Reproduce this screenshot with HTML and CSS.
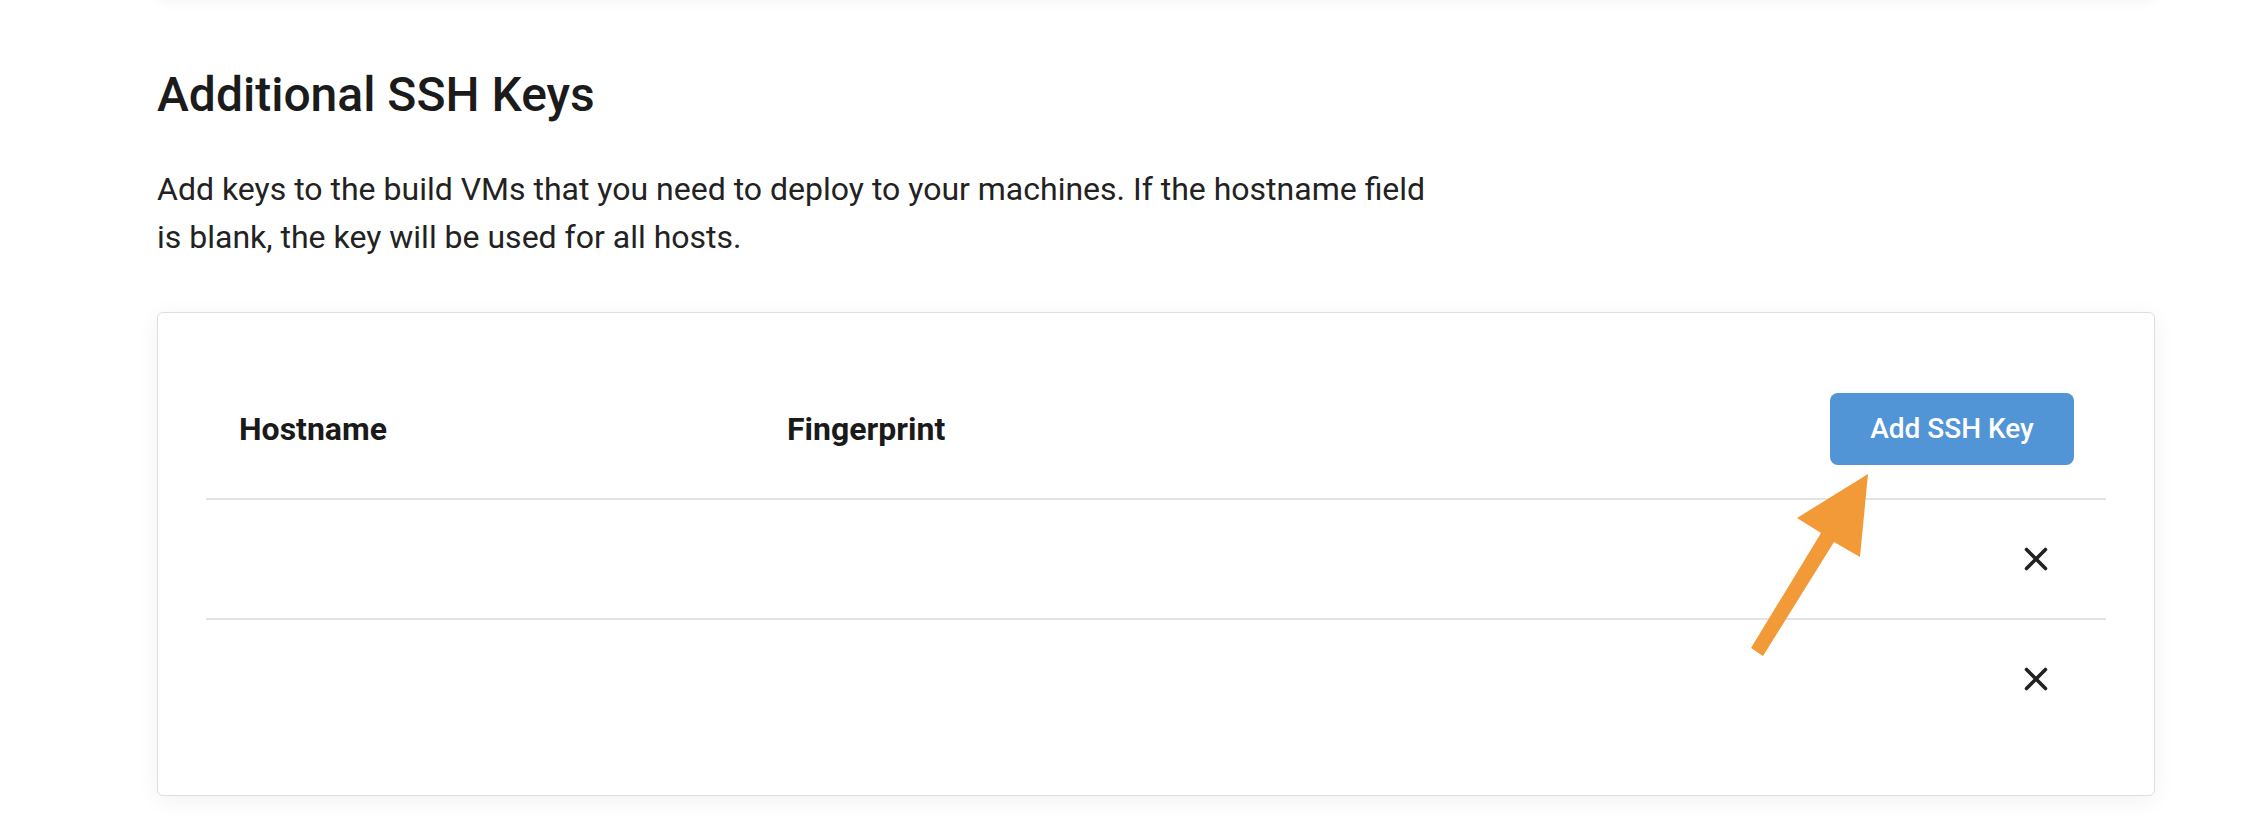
FILE: index.html
```html
<!DOCTYPE html>
<html lang="en">
<head>
<meta charset="utf-8">
<title>Additional SSH Keys</title>
<link rel="stylesheet" href="styles.css">
</head>
<body>
<div class="page">
  <div class="prev-card"></div>
  <h2 class="title">Additional SSH Keys</h2>
  <p class="intro">Add keys to the build VMs that you need to deploy to your machines. If the hostname field is blank, the key will be used for all hosts.</p>
  <div class="card">
    <div class="row head">
      <div class="cell">Hostname</div>
      <div class="cell">Fingerprint</div>
      <div class="cell action"><button class="btn">Add SSH Key</button></div>
    </div>
    <div class="row item">
      <div class="cell"></div>
      <div class="cell"></div>
      <div class="cell action">
        <svg class="x" viewBox="0 0 24 24" width="24" height="24"><path d="M2.5 2.5 L21.5 21.5 M21.5 2.5 L2.5 21.5" /></svg>
      </div>
    </div>
    <div class="row item">
      <div class="cell"></div>
      <div class="cell"></div>
      <div class="cell action">
        <svg class="x" viewBox="0 0 24 24" width="24" height="24"><path d="M2.5 2.5 L21.5 21.5 M21.5 2.5 L2.5 21.5" /></svg>
      </div>
    </div>
  </div>
</div>
<svg class="arrow" viewBox="0 0 2242 828" width="2242" height="828">
  <polygon points="1868,474 1860,557 1834,542 1763,656 1751,648 1821,533 1797,518" />
</svg>
</body>
</html>
```

FILE: styles.css
```css
html, body {
  margin: 0;
  padding: 0;
  background: #fff;
}
body {
  font-family: Roboto, "Noto Sans", "Liberation Sans", sans-serif;
  color: #1c1c1c;
  overflow: hidden;
  height: 828px;
}
.page {
  padding: 0 87px 0 157px;
}
.prev-card {
  height: 40px;
  margin-top: -46px;
  background: #fff;
  border-radius: 6px;
  box-shadow: 0 3px 18px rgba(0, 0, 0, 0.07);
}
.title {
  margin: 72px 0 0;
  font-size: 48px;
  font-weight: 500;
  line-height: 1.2;
  color: #1b1b1b;
}
.intro {
  margin: 41px 0 0;
  max-width: 1285px;
  font-size: 32px;
  line-height: 48px;
  color: #222;
}
.card {
  margin-top: 51px;
  background: #fff;
  border: 1px solid #dedede;
  border-radius: 6px;
  box-shadow: 0 4px 22px rgba(0, 0, 0, 0.06);
  padding: 47px 48px 57px;
}
.row {
  display: grid;
  grid-template-columns: 548px 1fr 309px;
  align-items: center;
}
.head {
  padding: 33px 0;
  font-size: 32px;
  font-weight: 700;
  color: #1a1a1a;
}
.head .cell {
  padding-left: 33px;
}
.item {
  height: 118px;
  border-top: 2px solid #e3e3e3;
}
.action {
  display: flex;
  justify-content: flex-end;
}
.head .action {
  padding-left: 0;
  padding-right: 32px;
}
.btn {
  width: 244px;
  height: 72px;
  border: none;
  border-radius: 8px;
  background: #5195d6;
  color: #fff;
  font-family: Roboto, "Noto Sans", "Liberation Sans", sans-serif;
  font-size: 28px;
  font-weight: 500;
  padding: 0;
}
.x {
  display: block;
  margin-right: 58px;
  fill: none;
  stroke: #222;
  stroke-width: 3.6;
  stroke-linecap: round;
}
.arrow {
  position: absolute;
  left: 0;
  top: 0;
  pointer-events: none;
  fill: #f29a38;
}
```
